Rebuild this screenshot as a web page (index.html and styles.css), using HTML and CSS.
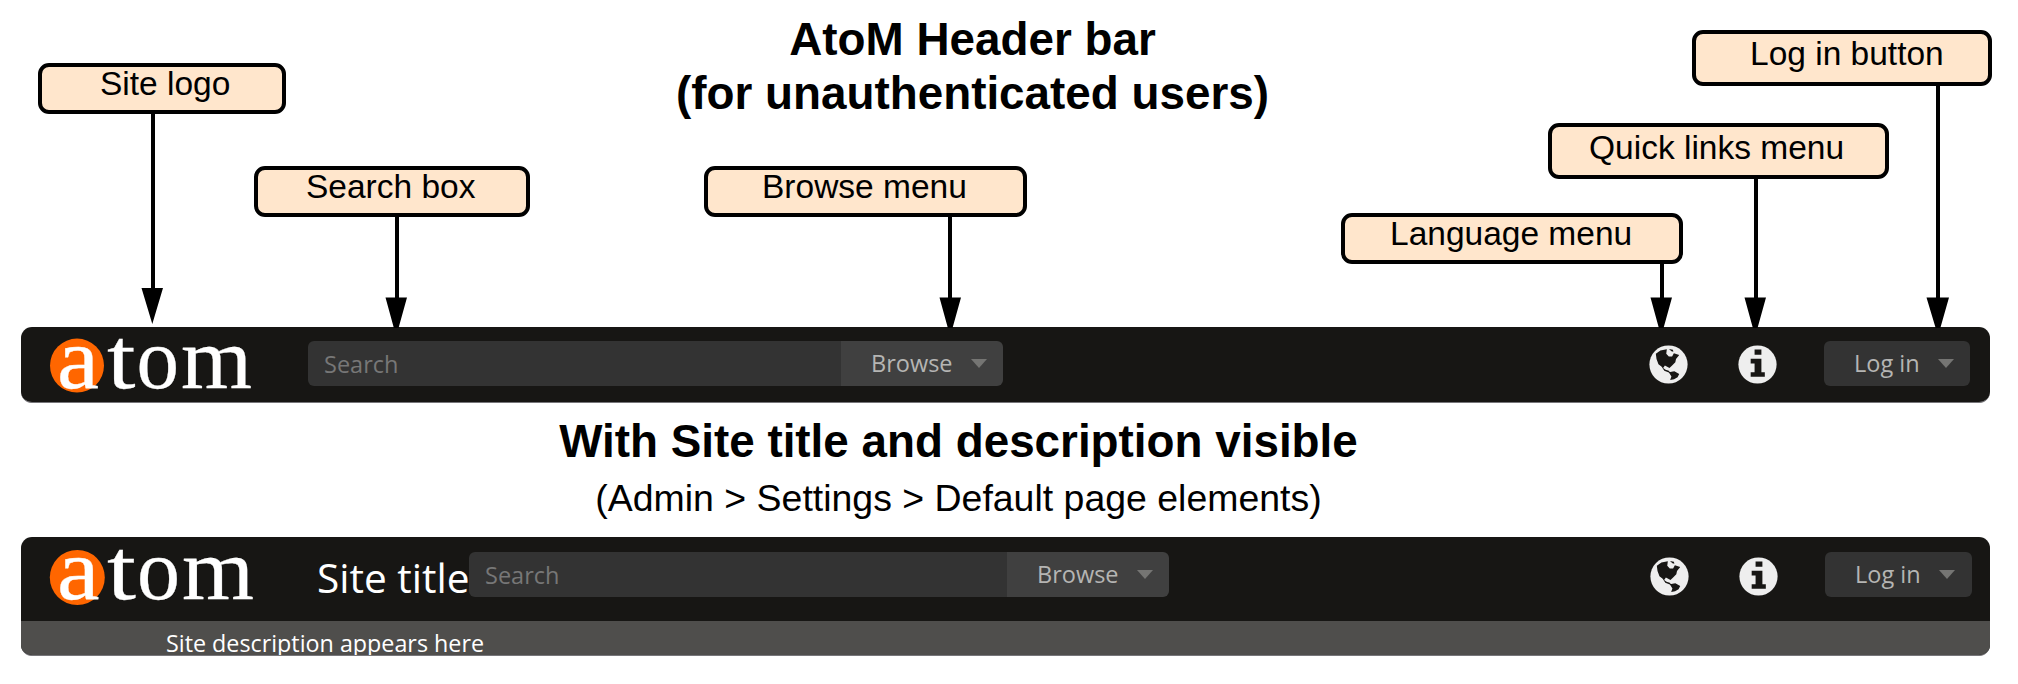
FILE: index.html
```html
<!DOCTYPE html>
<html lang="en">
<head>
<meta charset="utf-8">
<title>AtoM Header bar</title>
<link rel="stylesheet" href="styles.css">
</head>
<body>
<svg class="defs" aria-hidden="true">
  <symbol id="globe" viewBox="0 0 40 40">
    <circle cx="20" cy="20" r="19.6" fill="#eee"/>
    <path fill="#171614" d="M7 9L11.700 5.700 18.300 4.300 17.700 9 20.300 11.700 23.700 11.700 25.500 8.500 31 10.300 27.700 14.300 27 17.700 23.700 21 21 23.700 16.300 21 14.500 23.500 17 25.500 20.300 26.500 22.300 29 15.700 26.500 13 22.300 9.700 19.700 7.700 14.300zM20.500 4l4 .8.500 2.200-2-.5zM20.300 28L26 27 31 29.700 29.300 33 25.700 35 21.700 36 23 32.300z"/>
  </symbol>
  <symbol id="info" viewBox="0 0 40 40">
    <circle cx="20" cy="20" r="19.6" fill="#eee"/>
    <path fill="#171614" d="M17 4.500h7v5.500h-7zM13 14h11v14h3.500v4.500H13V28h4v-9h-4z"/>
  </symbol>
</svg>

<main class="figure">
  <header class="intro">
    <h1 class="heading">AtoM Header bar<br>(for unauthenticated users)</h1>
  </header>

  <section class="bar">
    <div class="bar-main">
      <svg class="logo" viewBox="0 0 210 74">
        <circle cx="28" cy="38.600" r="27"/>
        <text y="60.500" x="8" textLength="42" lengthAdjust="spacingAndGlyphs">a</text>
        <text y="60.500" x="58" textLength="28.500" lengthAdjust="spacingAndGlyphs">t</text>
        <text y="60.500" x="87.500" textLength="42.500" lengthAdjust="spacingAndGlyphs">o</text>
        <text y="60.500" x="132" textLength="71" lengthAdjust="spacingAndGlyphs">m</text>
      </svg>
      <div class="search"><span class="field">Search</span><span class="browse">Browse<i class="caret"></i></span></div>
      <svg class="icon globe"><use href="#globe"/></svg>
      <svg class="icon info"><use href="#info"/></svg>
      <div class="login">Log in<i class="caret"></i></div>
    </div>
  </section>

  <section class="middle">
    <h2 class="heading">With Site title and description visible</h2>
    <p class="path">(Admin &gt; Settings &gt; Default page elements)</p>
  </section>

  <section class="bar titled">
    <div class="bar-main">
      <svg class="logo" viewBox="0 0 210 74">
        <circle cx="28.300" cy="39.500" r="27.500"/>
        <text y="60.500" x="8" textLength="42.500" lengthAdjust="spacingAndGlyphs">a</text>
        <text y="60.500" x="58" textLength="29" lengthAdjust="spacingAndGlyphs">t</text>
        <text y="60.500" x="88" textLength="43" lengthAdjust="spacingAndGlyphs">o</text>
        <text y="60.500" x="133" textLength="72" lengthAdjust="spacingAndGlyphs">m</text>
      </svg>
      <div class="site-title">Site title</div>
      <div class="search"><span class="field">Search</span><span class="browse">Browse<i class="caret"></i></span></div>
      <svg class="icon globe"><use href="#globe"/></svg>
      <svg class="icon info"><use href="#info"/></svg>
      <div class="login">Log in<i class="caret"></i></div>
    </div>
    <div class="description">Site description appears here</div>
  </section>

  <svg class="arrows" width="2018" height="328" viewBox="0 0 2018 328">
    <g stroke="#000" stroke-width="4">
      <path d="M153 112V290M397 215V300M950 215V300M1662 262V300M1756 177V300M1938 84V300"/>
    </g>
    <path d="M141.500 288h21.500l-10.700 36zM385.500 297.500h21.500l-8.600 31h-4.400zM939.500 297.500h21.500l-8.600 31h-4.400zM1650.500 297.500h21.500l-8.600 31h-4.400zM1744.500 297.500h21.500l-8.600 31h-4.400zM1926.500 297.500h22.500l-8.800 31h-4.400z"/>
  </svg>
  <div class="callout c-logo">Site logo</div>
  <div class="callout c-search">Search box</div>
  <div class="callout c-browse">Browse menu</div>
  <div class="callout c-language">Language menu</div>
  <div class="callout c-links">Quick links menu</div>
  <div class="callout c-login">Log in button</div>
</main>
</body>
</html>
```
FILE: styles.css
```css
* { box-sizing: border-box; }
body { margin: 0; background: #fff; color: #000; font-family: "Liberation Sans", Arial, sans-serif; }
.defs { position: absolute; width: 0; height: 0; }
.figure { position: relative; width: 2018px; height: 684px; overflow: hidden; }

.intro { height: 327px; width: 1945px; padding-top: 12.800px; }
.heading { margin: 0; font-size: 45.800px; line-height: 54.300px; font-weight: 700; text-align: center; white-space: nowrap; }
.middle { width: 1917px; height: 134px; padding-top: 11.500px; text-align: center; }
.path { margin: 0; padding-top: 2.500px; font-size: 37.450px; line-height: 54px; white-space: nowrap; }

.bar { width: 1969px; height: 76px; margin-left: 21px; border-radius: 11px; overflow: hidden; background: #171614; border-bottom: 1px solid #77767a; }
.bar-main { display: flex; height: 75px; font-family: "Open Sans", "Noto Sans", sans-serif; font-size: 23.500px; line-height: 45px; color: #b5b5b3; }
.logo { width: 210px; height: 74px; margin-left: 28px; flex: none; overflow: visible; font-family: "Liberation Serif", serif; font-size: 86px; line-height: 1; fill: #fff; stroke: #fff; stroke-width: .3; }
.logo circle { fill: #ff6600; stroke: none; }
.search { display: flex; width: 695px; height: 45px; margin: 14px 0 0 49px; border-radius: 6px; overflow: hidden; flex: none; }
.field { flex: 1; padding: 1px 0 0 16px; background: #333; color: #777; }
.browse { display: flex; align-items: center; width: 162px; padding-left: 30px; background: #404040; }
.caret { width: 0; height: 0; border: 8px solid transparent; border-top: 9px solid #757573; border-bottom: 0; }
.browse .caret { margin-left: 18px; }
.icon { width: 39px; height: 39px; margin-top: 17.500px; flex: none; }
.globe { margin-left: 646px; }
.info { margin-left: 50px; }
.login { display: flex; align-items: center; width: 146px; height: 45px; margin: 14px 0 0 47px; padding-left: 30px; border-radius: 6px; background: #333; flex: none; }
.login .caret { margin-left: 18px; }

.titled { height: 119px; }
.titled .bar-main { height: 84px; }
.titled .logo { margin-top: 1px; }
.site-title { width: 152px; margin-left: 58px; padding-top: 18px; font-size: 40.600px; line-height: 45px; color: #fff; white-space: nowrap; flex: none; }
.titled .search { width: 700px; margin: 15px 0 0; }
.titled .globe { margin-left: 481px; }
.titled .icon { margin-top: 19.500px; }
.titled .login { margin: 15px 0 0 47px; width: 147px; }
.description { height: 34px; padding: 7px 0 0 145px; background: #4f4e4c; color: #fff; font-family: "Open Sans", "Noto Sans", sans-serif; font-size: 23.300px; line-height: 30px; white-space: nowrap; }

.arrows { position: absolute; left: 0; top: 0; }
.callout { position: absolute; top: 166px; height: 51px; border: 4px solid #000; border-radius: 11px; background: #ffe6cc; font-size: 33.500px; line-height: 33px; white-space: nowrap; }
.c-logo { left: 38px; top: 63px; width: 248px; padding-left: 58px; }
.c-search { left: 254px; width: 276px; padding-left: 48px; }
.c-browse { left: 704px; width: 323px; padding-left: 54px; }
.c-language { left: 1341px; top: 213px; width: 342px; padding-left: 45px; }
.c-links { left: 1548px; top: 123px; width: 341px; height: 56px; padding: 3.500px 0 0 37px; }
.c-login { left: 1692px; top: 30px; width: 300px; height: 56px; padding: 3px 0 0 54px; }
```
